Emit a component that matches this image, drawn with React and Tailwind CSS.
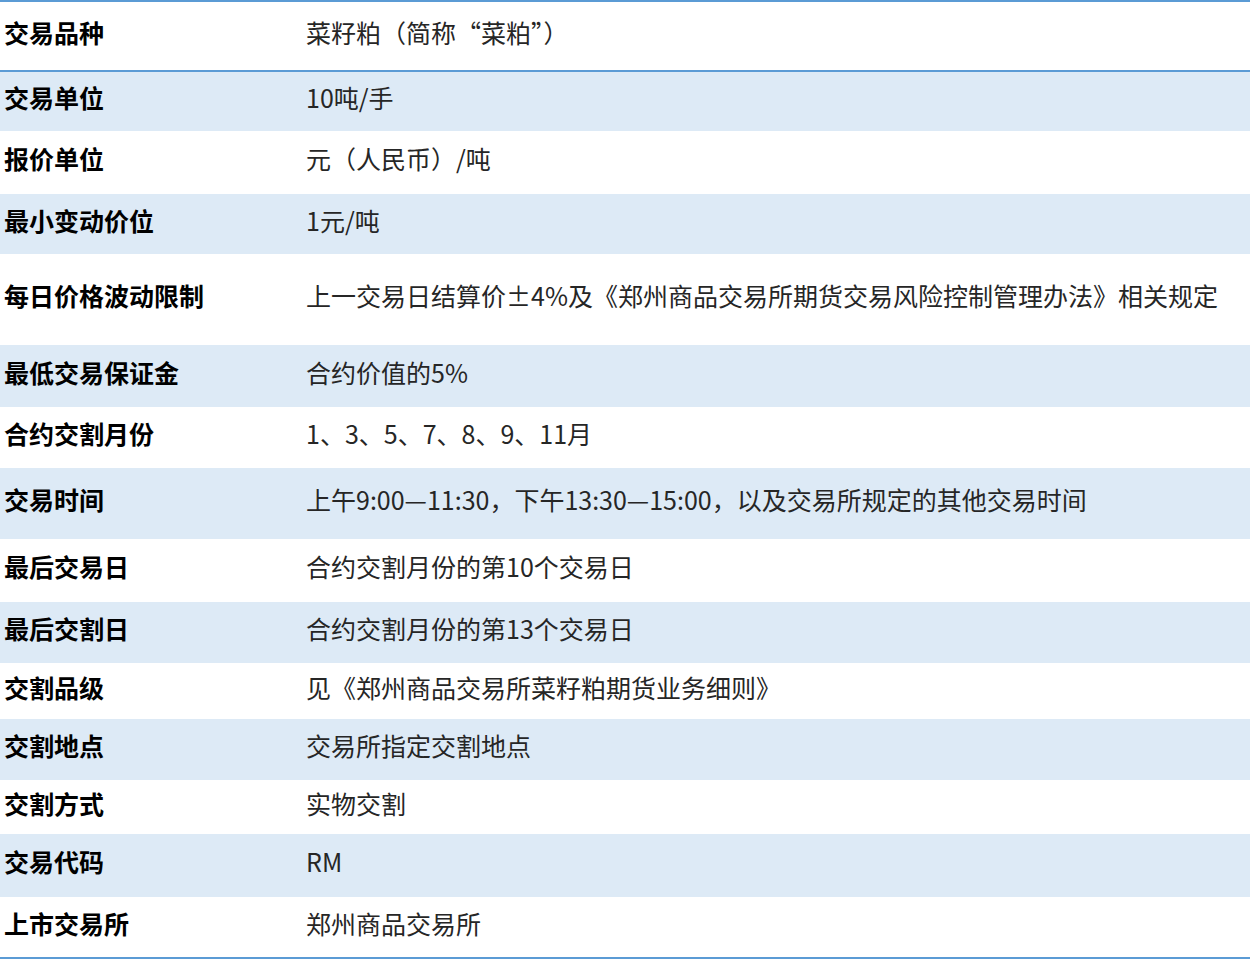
const rows = [
  { k: "交易品种", v: "菜籽粕（简称“菜粕”）", h: "h-[70px]", bg: "bg-white" },
  { k: "交易单位", v: "10吨/手", h: "h-[59px]", bg: "bg-[#ddeaf6]" },
  { k: "报价单位", v: "元（人民币）/吨", h: "h-[63px]", bg: "bg-white" },
  { k: "最小变动价位", v: "1元/吨", h: "h-[60px]", bg: "bg-[#ddeaf6]" },
  { k: "每日价格波动限制", v: "上一交易日结算价±4%及《郑州商品交易所期货交易风险控制管理办法》相关规定", h: "h-[91px]", bg: "bg-white" },
  { k: "最低交易保证金", v: "合约价值的5%", h: "h-[62px]", bg: "bg-[#ddeaf6]" },
  { k: "合约交割月份", v: "1、3、5、7、8、9、11月", h: "h-[61px]", bg: "bg-white" },
  { k: "交易时间", v: "上午9:00—11:30，下午13:30—15:00，以及交易所规定的其他交易时间", h: "h-[71px]", bg: "bg-[#ddeaf6]" },
  { k: "最后交易日", v: "合约交割月份的第10个交易日", h: "h-[63px]", bg: "bg-white" },
  { k: "最后交割日", v: "合约交割月份的第13个交易日", h: "h-[61px]", bg: "bg-[#ddeaf6]" },
  { k: "交割品级", v: "见《郑州商品交易所菜籽粕期货业务细则》", h: "h-[56px]", bg: "bg-white" },
  { k: "交割地点", v: "交易所指定交割地点", h: "h-[61px]", bg: "bg-[#ddeaf6]" },
  { k: "交割方式", v: "实物交割", h: "h-[54px]", bg: "bg-white" },
  { k: "交易代码", v: "RM", h: "h-[63px]", bg: "bg-[#ddeaf6]" },
  { k: "上市交易所", v: "郑州商品交易所", h: "h-[60px]", bg: "bg-white" },
];

export default function App() {
  return (
    <div className="w-[1252px] h-[962px] bg-white" style={{ fontFamily: '"Noto Sans CJK SC", "Noto Sans", sans-serif' }}>
      <div className="w-[1250px] border-t-2 border-b-2 border-[#5b9bd5] flex flex-col">
        {rows.map((r, i) => (
          <div
            key={i}
            className={`${r.h} ${r.bg} ${i === 0 ? "border-b-2 border-[#5b9bd5]" : ""} grid grid-cols-[302px_1fr] items-center pb-[8px] text-[25px] leading-none`}
          >
            <div className="pl-[4px] font-bold text-black whitespace-nowrap">{r.k}</div>
            <div className="pl-[4px] text-[#262626] whitespace-nowrap">{r.v}</div>
          </div>
        ))}
      </div>
    </div>
  );
}
